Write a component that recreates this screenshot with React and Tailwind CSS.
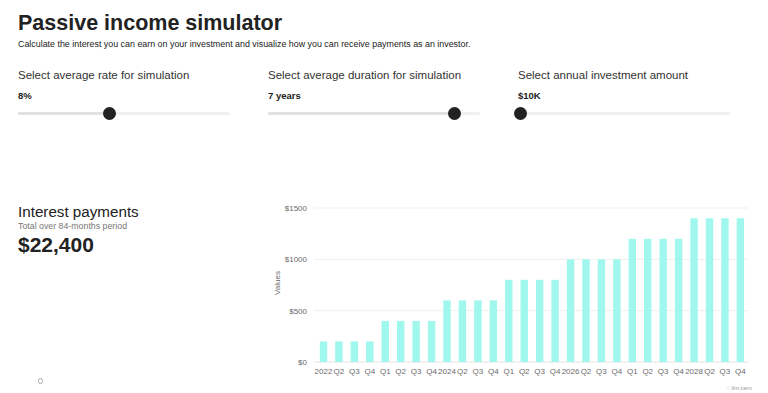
import React from "react";

const sliders = [
  { label: "Select average rate for simulation", value: "8%", pos: 91 },
  { label: "Select average duration for simulation", value: "7 years", pos: 186 },
  { label: "Select annual investment amount", value: "$10K", pos: 2 },
];

const labels = [
  "2022","Q2","Q3","Q4","Q1","Q2","Q3","Q4",
  "2024","Q2","Q3","Q4","Q1","Q2","Q3","Q4",
  "2026","Q2","Q3","Q4","Q1","Q2","Q3","Q4",
  "2028","Q2","Q3","Q4",
];

function Chart() {
  const y0 = 361;
  const scale = 154 / 1500;
  const ticks = [0, 500, 1000, 1500];
  return (
    <svg width="498" height="198" viewBox="270 195 498 198" className="block">
      {ticks.map((t) => {
        const y = y0 - t * scale;
        return (
          <g key={t}>
            <line x1="314" x2="748" y1={y} y2={y} stroke={t === 0 ? "#e4e4e4" : "#efefef"} strokeWidth="1" />
            <text x="307" y={y + 3} textAnchor="end" fontSize="8" fill="#6b6b6b" fontFamily="Liberation Sans, Arial, sans-serif">
              ${t}
            </text>
          </g>
        );
      })}
      <text
        x="0"
        y="0"
        fontSize="8"
        fill="#6b6b6b"
        fontFamily="Liberation Sans, Arial, sans-serif"
        textAnchor="middle"
        transform="translate(280 282) rotate(-90)"
      >
        Values
      </text>
      {labels.map((l, i) => {
        const v = 200 * (Math.floor(i / 4) + 1);
        const cx = 323.5 + i * 15.44;
        const h = v * scale;
        return (
          <g key={i}>
            <rect x={cx - 3.7} y={y0 - h} width="7.4" height={h} fill="#9ff7ee" />
            <text x={cx} y="373" textAnchor="middle" fontSize="8" fill="#6b6b6b" fontFamily="Liberation Sans, Arial, sans-serif">
              {l}
            </text>
          </g>
        );
      })}
      <text x="752" y="389" textAnchor="end" fontSize="6" fill="#9a9a9a" fontFamily="Liberation Sans, Arial, sans-serif">
        :: ilm:cem
      </text>
    </svg>
  );
}

export default function App() {
  return (
    <div className="w-[768px] h-[393px] overflow-hidden bg-white text-[#222] font-['Liberation_Sans',Arial,sans-serif]">
      <div className="pl-[18px] pt-[9px]">
        <h1 className="text-[21.5px] leading-[28px] font-bold">Passive income simulator</h1>
        <p className="text-[8.9px] leading-[12px] mt-[1px] text-[#222]">
          Calculate the interest you can earn on your investment and visualize how you can receive payments as an investor.
        </p>
        <div className="grid grid-cols-[250px_250px_250px] mt-[18px]">
          {sliders.map((s) => (
            <div key={s.label} className="flex flex-col">
              <div className="text-[11.5px] leading-[14px] text-[#333]">{s.label}</div>
              <div className="text-[9.5px] leading-[12px] font-bold mt-[8px]">{s.value}</div>
              <div className="relative w-[212px] h-[3px] mt-[10px] rounded-full bg-[#f0f0f0]">
                <div className="absolute left-0 top-0 h-[3px] rounded-full bg-[#e2e2e2]" style={{ width: s.pos }} />
                <div
                  className="absolute top-[-5px] w-[13px] h-[13px] rounded-full bg-[#222]"
                  style={{ left: s.pos - 6.5 }}
                />
              </div>
            </div>
          ))}
        </div>
      </div>
      <div className="flex mt-[81px]">
        <div className="w-[270px] pl-[18px] pt-[7px] flex flex-col">
          <div className="text-[15.2px] leading-[17px] text-[#222]">Interest payments</div>
          <div className="text-[8.8px] leading-[10px] text-[#777] mt-[1px]">Total over 84-months period</div>
          <div className="text-[21px] leading-[24px] font-bold mt-[2px]">$22,400</div>
          <div className="ml-[20px] mt-[121px] w-[5px] h-[6px] rounded-full border border-[#aaa]" />
        </div>
        <Chart />
      </div>
    </div>
  );
}
